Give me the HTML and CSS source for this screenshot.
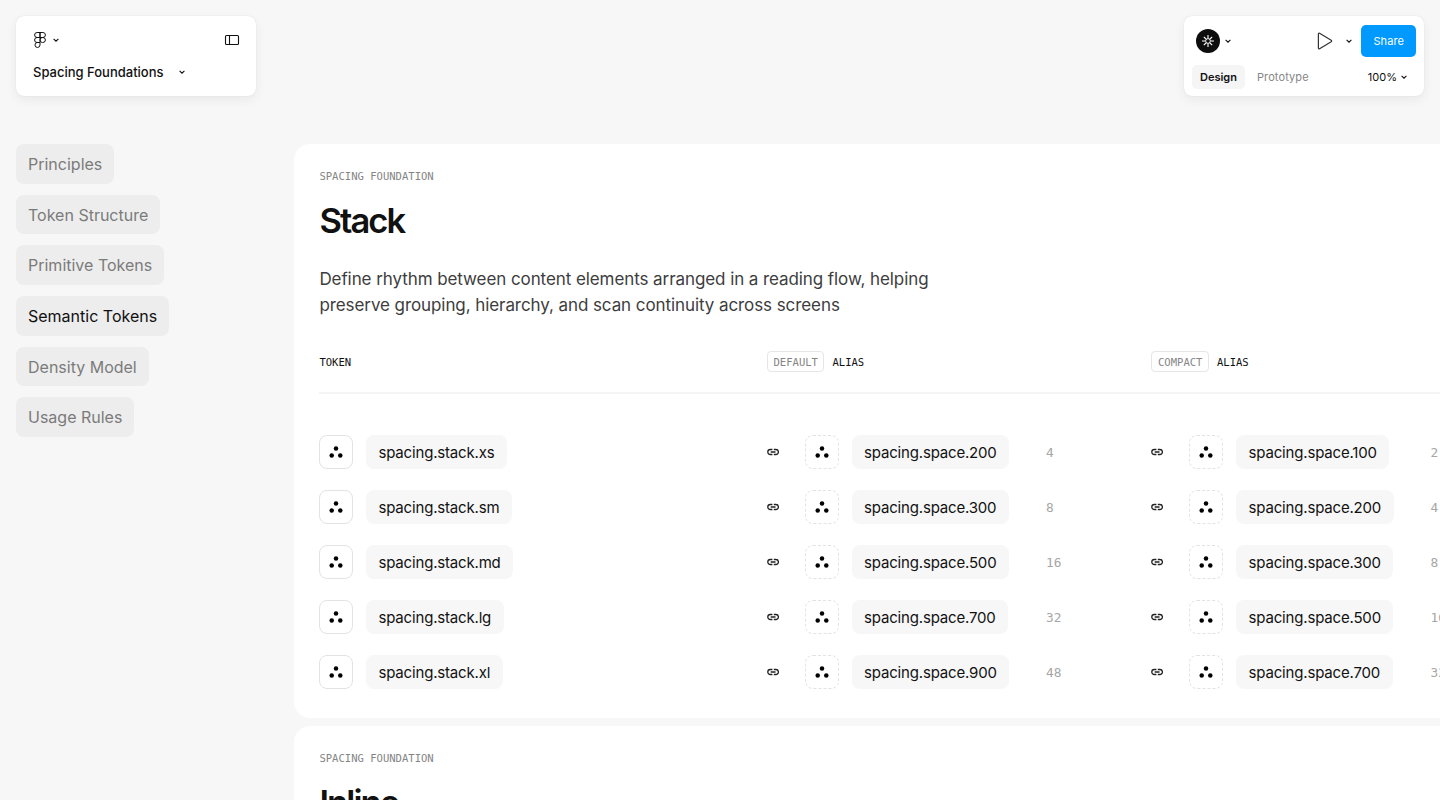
FILE: index.html
```html
<!DOCTYPE html>
<html lang="en">
<head>
    <meta charset="UTF-8">
    <title>Spacing Foundations</title>
    <link rel="stylesheet" href="styles.css">
</head>
<body>
    <!-- shared icons -->
    <svg class="sprite">
        <symbol id="chevron" viewBox="0 0 8 8">
            <path d="M1.6 2.8 4 5.2 6.4 2.8" fill="none" stroke="currentColor" stroke-width="1.1"/>
        </symbol>
        <symbol id="dots" viewBox="0 0 32 32">
            <circle cx="16" cy="12.6" r="2.25"/>
            <circle cx="11.7" cy="19.6" r="2.25"/>
            <circle cx="20.3" cy="19.6" r="2.25"/>
        </symbol>
        <symbol id="link" viewBox="0 0 12 8">
            <path d="M5.4 1.5H3.3a2.5 2.5 0 0 0 0 5h2.1M6.8 1.5h2.1a2.5 2.5 0 0 1 0 5H6.8M3.7 4h4.8" fill="none" stroke="#222" stroke-width="1.3"/>
        </symbol>
    </svg>

    <header class="toolbar">
        <div class="panel file-panel">
            <div class="panel-row">
                <svg class="logo" width="12" height="16" viewBox="0 0 12 16" fill="none" stroke="#111" stroke-width="1">
                    <path d="M6 .5H3.1a2.5 2.5 0 0 0 0 5H6zM6 .5h2.9a2.5 2.5 0 0 1 0 5H6zM6 5.5H3.1a2.5 2.5 0 0 0 0 5H6zM6 10.5H3.1A2.5 2.5 0 1 0 6 13z"/>
                    <rect x="6" y="5.5" width="5.4" height="5" rx="2.5"/>
                </svg>
                <svg class="chevron"><use href="#chevron"/></svg>
                <svg class="sidebar-icon" width="16" height="12" viewBox="0 0 16 12" fill="none" stroke="#111" stroke-width="1.1">
                    <rect x="1.5" y="1.5" width="13" height="9" rx="1"/>
                    <path d="M5.5 1.5v9"/>
                </svg>
            </div>
            <div class="file-name">
                <span>Spacing Foundations</span>
                <svg class="chevron"><use href="#chevron"/></svg>
            </div>
        </div>
        <div class="panel share-panel">
            <div class="share-row">
                <svg width="24" height="24" viewBox="0 0 24 24" fill="none" stroke="#fff">
                    <circle cx="12" cy="12" r="12" fill="#0d0d0d" stroke="none"/>
                    <circle cx="12" cy="12" r="2.3" stroke-width=".7"/>
                    <path d="M12 10V6M12 14v4M10 12H6M14 12h4M10.5 10.5 7.8 7.8M13.5 10.5l2.7-2.7M10.5 13.5l-2.7 2.7M13.5 13.5l2.7 2.7" stroke-width="1.1"/>
                </svg>
                <svg class="chevron"><use href="#chevron"/></svg>
                <svg class="play" width="16" height="18" viewBox="0 0 16 18" fill="none" stroke="#333" stroke-width="1.2" stroke-linejoin="round">
                    <path d="M1.4 2v14c0 .7.6 1 1.2.7l11.6-7c.6-.4.6-1 0-1.4l-11.6-7c-.6-.3-1.2 0-1.2.7z"/>
                </svg>
                <svg class="chevron play-menu"><use href="#chevron"/></svg>
                <button class="share-btn">Share</button>
            </div>
            <div class="tab-row">
                <button class="tab active">Design</button>
                <button class="tab">Prototype</button>
                <span class="zoom-level">100%</span>
                <svg class="chevron"><use href="#chevron"/></svg>
            </div>
        </div>
    </header>

    <div class="layout">
        <nav class="side-nav">
            <a class="nav-item">Principles</a>
            <a class="nav-item">Token Structure</a>
            <a class="nav-item">Primitive Tokens</a>
            <a class="nav-item active">Semantic Tokens</a>
            <a class="nav-item">Density Model</a>
            <a class="nav-item">Usage Rules</a>
        </nav>

        <main class="sections">
            <section class="card">
                <div class="eyebrow">SPACING FOUNDATION</div>
                <h1>Stack</h1>
                <p class="intro">Define rhythm between content elements arranged in a reading flow, helping<br>preserve grouping, hierarchy, and scan continuity across screens</p>
                <div class="grid table-head">
                    <div>TOKEN</div>
                    <div class="head-cell"><span class="tag">DEFAULT</span>ALIAS</div>
                    <div class="head-cell"><span class="tag">COMPACT</span>ALIAS</div>
                </div>
                <div class="rows">
                    <div class="grid">
                        <div class="token"><svg class="box"><use href="#dots"/></svg><span class="chip">spacing.stack.xs</span></div>
                        <div class="alias"><svg class="link"><use href="#link"/></svg><svg class="box dashed"><use href="#dots"/></svg><span class="chip">spacing.space.200</span><span class="value">4</span></div>
                        <div class="alias"><svg class="link"><use href="#link"/></svg><svg class="box dashed"><use href="#dots"/></svg><span class="chip">spacing.space.100</span><span class="value">2</span></div>
                    </div>
                    <div class="grid">
                        <div class="token"><svg class="box"><use href="#dots"/></svg><span class="chip">spacing.stack.sm</span></div>
                        <div class="alias"><svg class="link"><use href="#link"/></svg><svg class="box dashed"><use href="#dots"/></svg><span class="chip">spacing.space.300</span><span class="value">8</span></div>
                        <div class="alias"><svg class="link"><use href="#link"/></svg><svg class="box dashed"><use href="#dots"/></svg><span class="chip">spacing.space.200</span><span class="value">4</span></div>
                    </div>
                    <div class="grid">
                        <div class="token"><svg class="box"><use href="#dots"/></svg><span class="chip">spacing.stack.md</span></div>
                        <div class="alias"><svg class="link"><use href="#link"/></svg><svg class="box dashed"><use href="#dots"/></svg><span class="chip">spacing.space.500</span><span class="value">16</span></div>
                        <div class="alias"><svg class="link"><use href="#link"/></svg><svg class="box dashed"><use href="#dots"/></svg><span class="chip">spacing.space.300</span><span class="value">8</span></div>
                    </div>
                    <div class="grid">
                        <div class="token"><svg class="box"><use href="#dots"/></svg><span class="chip">spacing.stack.lg</span></div>
                        <div class="alias"><svg class="link"><use href="#link"/></svg><svg class="box dashed"><use href="#dots"/></svg><span class="chip">spacing.space.700</span><span class="value">32</span></div>
                        <div class="alias"><svg class="link"><use href="#link"/></svg><svg class="box dashed"><use href="#dots"/></svg><span class="chip">spacing.space.500</span><span class="value">16</span></div>
                    </div>
                    <div class="grid">
                        <div class="token"><svg class="box"><use href="#dots"/></svg><span class="chip">spacing.stack.xl</span></div>
                        <div class="alias"><svg class="link"><use href="#link"/></svg><svg class="box dashed"><use href="#dots"/></svg><span class="chip">spacing.space.900</span><span class="value">48</span></div>
                        <div class="alias"><svg class="link"><use href="#link"/></svg><svg class="box dashed"><use href="#dots"/></svg><span class="chip">spacing.space.700</span><span class="value">32</span></div>
                    </div>
                </div>
            </section>
            <section class="card">
                <div class="eyebrow">SPACING FOUNDATION</div>
                <h1>Inline</h1>
            </section>
        </main>
    </div>
</body>
</html>
```
FILE: styles.css
```css
* {
    box-sizing: border-box;
}
body {
    margin: 0;
    height: 100vh;
    overflow: hidden;
    background: #f7f7f7;
    color: #111;
    font-family: Inter, sans-serif;
}
svg {
    display: block;
    flex-shrink: 0;
}
button {
    border: 0;
    padding: 0;
    font-family: inherit;
}
.sprite {
    display: none;
}
.chevron {
    width: 8px;
    height: 8px;
}

/* floating toolbar panels */
.toolbar {
    display: flex;
    justify-content: space-between;
    padding: 16px;
}
.panel {
    width: 240px;
    height: 80px;
    background: #fff;
    border-radius: 8px;
    box-shadow: 0 0 1px rgba(0, 0, 0, 0.16), 0 4px 12px rgba(0, 0, 0, 0.06);
}
.file-panel {
    padding: 12px 16px 0 17px;
}
.panel-row {
    display: flex;
    align-items: center;
    height: 24px;
}
.logo {
    margin: 0 6px 0 1px;
}
.sidebar-icon {
    margin-left: auto;
}
.file-name {
    display: flex;
    align-items: center;
    gap: 14px;
    height: 40px;
    font-size: 13px;
    font-weight: 500;
}
.share-panel {
    padding: 9px 8px 0;
}
.share-row {
    display: flex;
    align-items: center;
    height: 32px;
    padding-left: 4px;
}
.share-row .chevron {
    margin-left: 4px;
}
.play {
    margin-left: auto;
}
.share-row .play-menu {
    margin: 0 8px 0 12px;
}
.share-btn {
    width: 54.6px;
    height: 32px;
    border-radius: 5px;
    background: #0099ff;
    color: #fff;
    font-size: 11px;
    letter-spacing: 0.1px;
}
.tab-row {
    display: flex;
    align-items: center;
    height: 24px;
    margin-top: 8px;
    font-size: 11px;
}
.tab {
    height: 24px;
    padding: 0 8px;
    border-radius: 5px;
    background: none;
    color: #868686;
    font-size: 11px;
}
.tab + .tab {
    margin-left: 4px;
    letter-spacing: 0.1px;
}
.tab.active {
    background: #f5f5f5;
    color: #111;
    font-weight: 600;
}
.zoom-level {
    margin: 0 3px 0 auto;
}
.tab-row .chevron {
    margin-right: 8px;
}

/* page body */
.layout {
    display: grid;
    grid-template-columns: 278px 1400px;
    padding: 32px 0 0 16px;
}
.side-nav {
    display: flex;
    flex-direction: column;
    align-items: flex-start;
    gap: 11px;
}
.nav-item {
    height: 39.7px;
    padding: 0 12px;
    border-radius: 8px;
    background: #ededed;
    color: #7b7b7b;
    font-size: 16px;
    line-height: 40px;
}
.nav-item.active {
    color: #111;
}
.sections {
    display: flex;
    flex-direction: column;
    gap: 8px;
}
.card {
    height: 574px;
    padding: 25px 0 0 25.4px;
    border-radius: 16px;
    background: #fff;
}
.eyebrow,
.table-head {
    font-family: "DejaVu Sans Mono", monospace;
    font-size: 10.55px;
    line-height: 14px;
}
.eyebrow {
    color: #858585;
}
h1 {
    margin: 17px 0 0;
    font-size: 34.5px;
    font-weight: 600;
    line-height: 42px;
    letter-spacing: -1.9px;
}
.intro {
    margin: 25px 0 0;
    color: #3d3d3d;
    font-size: 17px;
    line-height: 25.5px;
    letter-spacing: -0.08px;
}
.grid {
    display: grid;
    grid-template-columns: 447.6px 384.5px 384.5px;
    align-items: center;
}
.table-head {
    height: 64px;
    margin-top: 12px;
    padding-top: 1px;
    border-bottom: 2px solid #f5f5f5;
}
.head-cell {
    display: flex;
    align-items: center;
}
.tag {
    height: 21px;
    margin-right: 8px;
    padding: 0 5.5px;
    border: 1px solid #e6e6e6;
    border-radius: 4px;
    color: #858585;
    line-height: 20px;
}
.rows {
    display: flex;
    flex-direction: column;
    gap: 20.9px;
    margin-top: 41px;
}
.token {
    display: flex;
    align-items: center;
    gap: 12.6px;
}
/* link icon, swatch, name, pixel value */
.alias {
    display: grid;
    grid-template-columns: 38px 46.6px 194.4px auto;
    align-items: center;
    justify-items: start;
}
.box {
    width: 34px;
    height: 34px;
    border: 1px solid #e3e3e3;
    border-radius: 8px;
}
.dashed {
    border-style: dashed;
}
.chip {
    height: 34px;
    padding: 0 12.5px;
    border-radius: 8px;
    background: #f7f7f7;
    font-size: 15px;
    line-height: 35px;
    letter-spacing: -0.18px;
}
.link {
    width: 12px;
    height: 8px;
}
.value {
    padding-top: 1px;
    color: #a6a6a6;
    font-family: "DejaVu Sans Mono", monospace;
    font-size: 12.8px;
}
```
